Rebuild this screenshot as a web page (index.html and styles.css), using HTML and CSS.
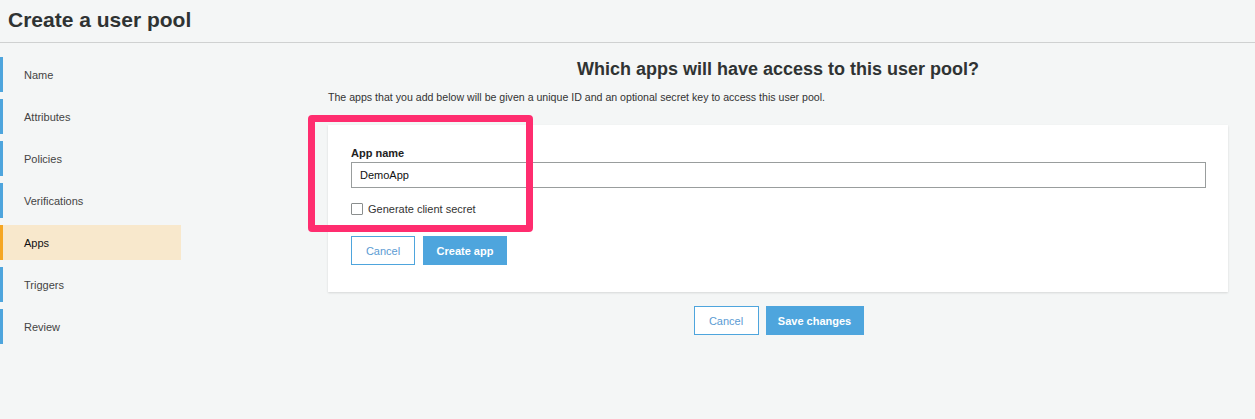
FILE: index.html
```html
<!DOCTYPE html>
<html>
<head>
<meta charset="utf-8">
<link rel="stylesheet" href="styles.css">
</head>
<body>
<header class="page-header">
  <h1 class="page-title">Create a user pool</h1>
</header>
<div class="layout">
  <nav class="sidebar">
    <a class="nav-item">Name</a>
    <a class="nav-item">Attributes</a>
    <a class="nav-item">Policies</a>
    <a class="nav-item">Verifications</a>
    <a class="nav-item active">Apps</a>
    <a class="nav-item">Triggers</a>
    <a class="nav-item">Review</a>
  </nav>
  <main class="main">
    <h2 class="section-title">Which apps will have access to this user pool?</h2>
    <p class="intro">The apps that you add below will be given a unique ID and an optional secret key to access this user pool.</p>
    <section class="card">
      <div class="highlight"></div>
      <label class="field-label">App name</label>
      <div class="input">DemoApp</div>
      <label class="check">
        <span class="checkbox"></span>
        <span>Generate client secret</span>
      </label>
      <div class="btn-row">
        <button class="btn btn-outline btn-sm">Cancel</button>
        <button class="btn btn-primary btn-create">Create app</button>
      </div>
    </section>
    <div class="footer-actions">
      <button class="btn btn-outline btn-cancel2">Cancel</button>
      <button class="btn btn-primary btn-save">Save changes</button>
    </div>
  </main>
</div>
</body>
</html>
```

FILE: styles.css
```css
* { box-sizing: border-box; }
html, body {
  margin: 0;
  padding: 0;
  background: #f4f6f6;
  font-family: "Liberation Sans", Arial, Helvetica, sans-serif;
  color: #333;
}
body { width: 1255px; height: 419px; overflow: hidden; }

.page-header {
  height: 43px;
  border-bottom: 1px solid #cfd1d1;
  padding: 0 0 0 8px;
  display: flex;
  align-items: center;
}
.page-title {
  margin: 0 0 3px 0;
  font-size: 21px;
  font-weight: bold;
  color: #2f3333;
}

.layout {
  display: flex;
  padding-top: 14px;
}
.sidebar {
  width: 181px;
  display: flex;
  flex-direction: column;
  gap: 7px;
  flex: none;
}
.nav-item {
  display: flex;
  align-items: center;
  height: 35px;
  padding-left: 21px;
  border-left: 3px solid #4ea5dd;
  font-size: 11px;
  color: #444;
}
.nav-item:not(.active) { width: 60px; }
.nav-item.active {
  background: #f8e8cc;
  border-left-color: #f5a623;
  color: #111;
}

.main {
  margin-left: 147px;
  width: 900px;
  display: flex;
  flex-direction: column;
}
.section-title {
  margin: 1px 0 0 0;
  text-align: center;
  font-size: 18px;
  font-weight: bold;
  color: #2f3333;
  line-height: 22px;
}
.intro {
  margin: 10px 0 0 0;
  font-size: 10.6px;
  color: #333;
  line-height: 14px;
}

.card {
  position: relative;
  margin-top: 21px;
  background: #fff;
  box-shadow: 0 1px 2px rgba(0,0,0,0.12);
  padding: 22px 22px 27px 23px;
  display: flex;
  flex-direction: column;
  height: 167px;
}
.highlight {
  position: absolute;
  left: -20px;
  top: -10px;
  width: 225px;
  height: 117px;
  border: 7px solid #ff2d6f;
  border-radius: 4px;
  pointer-events: none;
}
.field-label {
  font-size: 11px;
  font-weight: bold;
  color: #222;
  line-height: 13px;
}
.input {
  margin-top: 2px;
  width: 855px;
  height: 26px;
  border: 1px solid #999d9d;
  padding: 0 8px;
  display: flex;
  align-items: center;
  font-size: 11px;
  color: #111;
}
.check {
  margin-top: 15px;
  display: flex;
  align-items: center;
  gap: 5px;
  font-size: 11px;
  color: #333;
  line-height: 12px;
}
.checkbox {
  width: 12px;
  height: 12px;
  border: 1px solid #8a8e8e;
  border-radius: 1px;
  background: #fff;
}
.btn-row {
  margin-top: 21px;
  display: flex;
  gap: 8px;
}
.btn {
  height: 29px;
  font-family: inherit;
  font-size: 11px;
  padding: 0;
  border-radius: 0;
  cursor: pointer;
}
.btn-outline {
  background: #fff;
  border: 1px solid #4ea5dd;
  color: #5b9bd3;
}
.btn-primary {
  background: #4ea5dd;
  border: 1px solid #4ea5dd;
  color: #fff;
  font-weight: bold;
}
.btn-sm { width: 64px; }
.btn-create { width: 84px; }

.footer-actions {
  margin-top: 14px;
  display: flex;
  justify-content: center;
  gap: 7px;
  padding-left: 1px;
}
.btn-cancel2 { width: 65px; }
.btn-save { width: 98px; }
```
